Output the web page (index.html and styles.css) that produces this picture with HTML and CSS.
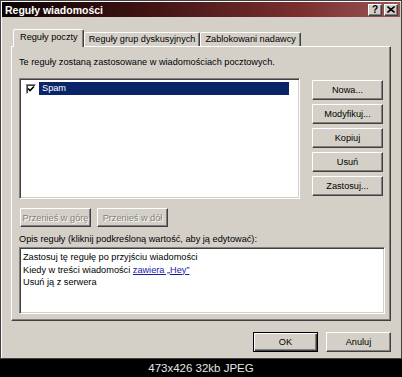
FILE: index.html
```html
<!DOCTYPE html>
<html lang="pl">
<head>
    <meta charset="UTF-8">
    <title>Reguły wiadomości</title>
    <link rel="stylesheet" href="styles.css">
</head>
<body>
    <div class="window">
        <div class="titlebar">
            <span class="title">Reguły wiadomości</span>
            <div class="caption-btns">
                <span class="cap-btn">?</span>
                <span class="cap-btn">
                    <svg width="8" height="7" viewBox="0 0 8 7">
                        <path d="M0.5 0.5 L7.5 6.5 M7.5 0.5 L0.5 6.5" stroke="#000" stroke-width="1.6" fill="none"/>
                    </svg>
                </span>
            </div>
        </div>

        <div class="client">
            <div class="tabs">
                <div class="tab active">Reguły poczty</div>
                <div class="tab">Reguły grup dyskusyjnych</div>
                <div class="tab">Zablokowani nadawcy</div>
            </div>

            <div class="panel">
                <div class="intro">Te reguły zostaną zastosowane w wiadomościach pocztowych.</div>

                <div class="rules-row">
                    <div class="listbox">
                        <div class="list-item">
                            <span class="check">
                                <svg width="8" height="8" viewBox="0 0 8 8">
                                    <path d="M1 3.5 L3 5.5 L7 1.5" stroke="#000" stroke-width="1.6" fill="none"/>
                                </svg>
                            </span>
                            <span class="item-label">Spam</span>
                        </div>
                    </div>
                    <div class="side-btns">
                        <button class="btn">Nowa...</button>
                        <button class="btn">Modyfikuj...</button>
                        <button class="btn">Kopiuj</button>
                        <button class="btn">Usuń</button>
                        <button class="btn">Zastosuj...</button>
                    </div>
                </div>

                <div class="move-row">
                    <button class="btn move-btn disabled">Przenieś w górę</button>
                    <button class="btn move-btn disabled">Przenieś w dół</button>
                </div>

                <div class="desc-label">Opis reguły (kliknij podkreśloną wartość, aby ją edytować):</div>
                <div class="desc-box">
                    <div>Zastosuj tę regułę po przyjściu wiadomości</div>
                    <div>Kiedy w treści wiadomości <a class="rule-link">zawiera „Hey”</a></div>
                    <div>Usuń ją z serwera</div>
                </div>
            </div>

            <div class="footer">
                <button class="btn footer-btn default">OK</button>
                <button class="btn footer-btn">Anuluj</button>
            </div>
        </div>
    </div>

    <div class="caption">473x426 32kb JPEG</div>
</body>
</html>
```

FILE: styles.css
```css
* { margin: 0; padding: 0; box-sizing: border-box; }
body {
    font-family: 'Liberation Sans', Arial, sans-serif;
    font-size: 9.2px;
    color: #000;
    background: #000;
    width: 402px;
    height: 377px;
    overflow: hidden;
}

.window {
    height: 359px;
    background: #d4d0c8;
    border: 1px solid #404040;
    padding: 1px;
    box-shadow: inset 1px 1px #ffffff;
    display: flex;
    flex-direction: column;
}

.titlebar {
    height: 15px;
    background: linear-gradient(to right, #0c0303, #3e1212 35%, #7a2f2f 75%, #9a5656);
    display: flex;
    align-items: center;
    justify-content: space-between;
    padding: 0 2px 0 3px;
}

.title {
    color: #fff;
    font-weight: bold;
    font-size: 10.5px;
}

.caption-btns {
    display: flex;
    gap: 2px;
}

.cap-btn {
    width: 14px;
    height: 12px;
    background: #d4d0c8;
    border: 1px solid;
    border-color: #fff #404040 #404040 #fff;
    box-shadow: inset -1px -1px #808080;
    display: flex;
    align-items: center;
    justify-content: center;
    font-weight: bold;
    font-size: 10px;
    line-height: 1;
}

.client {
    flex: 1;
    padding: 11px 9px 0 9px;
    display: flex;
    flex-direction: column;
}

/* zakładki */
.tabs {
    display: flex;
    align-items: flex-end;
    height: 18px;
    padding-left: 2px;
    position: relative;
    z-index: 1;
}

.tab {
    height: 14px;
    padding: 0 4px;
    border: 1px solid;
    border-bottom: none;
    border-color: #fff #404040 #404040 #fff;
    border-radius: 2px 2px 0 0;
    box-shadow: inset -1px 0 #808080;
    line-height: 13px;
    white-space: nowrap;
}

.tab.active {
    height: 18px;
    padding: 0 5px 0 6px;
    line-height: 15px;
    margin-bottom: -1px;
    background: #d4d0c8;
}

.panel {
    height: 275px;
    border: 1px solid;
    border-color: #fff #404040 #404040 #fff;
    box-shadow: inset -1px -1px #808080;
    padding: 9px 7px 0 7px;
}

.intro {
    line-height: 12px;
    height: 12px;
}

.rules-row {
    display: flex;
    margin-top: 10px;
}

.listbox {
    width: 282px;
    height: 121px;
    background: #fff;
    border: 1px solid;
    border-color: #808080 #fff #fff #808080;
    box-shadow: inset 1px 1px #404040, inset -1px -1px #d4d0c8;
    padding: 3px 10px 0 6px;
}

.list-item {
    display: flex;
    align-items: center;
    height: 13px;
}

.check {
    width: 10px;
    height: 10px;
    border: 1px solid;
    border-color: #808080 #fff #fff #808080;
    box-shadow: inset 1px 1px #404040;
    background: #fff;
    display: flex;
    align-items: center;
    justify-content: center;
    margin-right: 3px;
}

.item-label {
    flex: 1;
    height: 13px;
    line-height: 13px;
    background: #0a246a;
    color: #fff;
    padding-left: 3px;
}

.side-btns {
    margin-left: 12px;
    padding-top: 2px;
    display: flex;
    flex-direction: column;
    gap: 4px;
}

.btn {
    font-family: inherit;
    font-size: inherit;
    color: #000;
    background: #d4d0c8;
    border: 1px solid;
    border-color: #fff #404040 #404040 #fff;
    box-shadow: inset -1px -1px #808080;
    height: 20px;
    width: 71px;
    padding: 0;
    white-space: nowrap;
}

.btn.disabled {
    color: #808080;
    text-shadow: 1px 1px #fff;
}

.move-row {
    display: flex;
    gap: 6px;
    margin-top: 9px;
    padding-left: 1px;
}

.move-btn {
    width: 71px;
    height: 19px;
}

.desc-label {
    margin-top: 6px;
    line-height: 12px;
    height: 12px;
}

.desc-box {
    margin-top: 2px;
    width: 366px;
    height: 67px;
    background: #fff;
    border: 1px solid;
    border-color: #808080 #fff #fff #808080;
    box-shadow: inset 1px 1px #404040, inset -1px -1px #d4d0c8;
    padding: 3px 3px 0 3px;
    line-height: 12.5px;
}

.rule-link {
    color: #1a1aa6;
    text-decoration: underline;
}

.footer {
    display: flex;
    justify-content: flex-end;
    gap: 8px;
    margin-top: 11px;
}

.footer-btn {
    width: 65px;
    height: 20px;
}

.btn.default {
    border: 1px solid #000;
    box-shadow: inset 1px 1px #fff, inset -1px -1px #404040, inset -2px -2px #808080;
}

.caption {
    height: 18px;
    line-height: 18px;
    text-align: center;
    color: #e6e6e6;
    font-size: 11.5px;
}
```
